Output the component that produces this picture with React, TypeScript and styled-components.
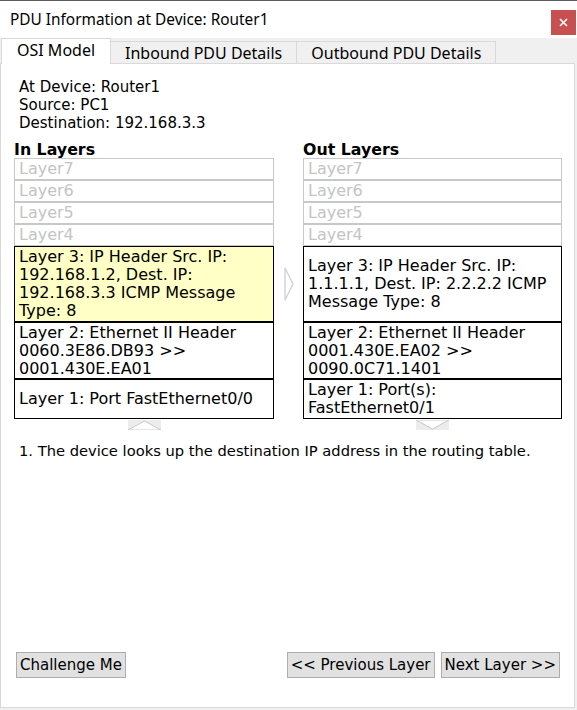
import React from 'react'
import styled, { createGlobalStyle } from 'styled-components'

const GlobalStyle = createGlobalStyle`
  html, body {
    margin: 0;
    padding: 0;
    background: #f0f0f0;
  }
`

type LayerState = 'off' | 'hi' | 'on'

interface LayerInfo {
  text: string
  height: number
  state: LayerState
}

const inLayers: LayerInfo[] = [
  { text: 'Layer7', height: 22, state: 'off' },
  { text: 'Layer6', height: 22, state: 'off' },
  { text: 'Layer5', height: 22, state: 'off' },
  { text: 'Layer4', height: 22, state: 'off' },
  {
    text: 'Layer 3: IP Header Src. IP: 192.168.1.2, Dest. IP: 192.168.3.3 ICMP Message Type: 8',
    height: 76,
    state: 'hi',
  },
  {
    text: 'Layer 2: Ethernet II Header 0060.3E86.DB93 >> 0001.430E.EA01',
    height: 57,
    state: 'on',
  },
  { text: 'Layer 1: Port FastEthernet0/0', height: 40, state: 'on' },
]

const outLayers: LayerInfo[] = [
  { text: 'Layer7', height: 22, state: 'off' },
  { text: 'Layer6', height: 22, state: 'off' },
  { text: 'Layer5', height: 22, state: 'off' },
  { text: 'Layer4', height: 22, state: 'off' },
  {
    text: 'Layer 3: IP Header Src. IP: 1.1.1.1, Dest. IP: 2.2.2.2 ICMP Message Type: 8',
    height: 76,
    state: 'on',
  },
  {
    text: 'Layer 2: Ethernet II Header 0001.430E.EA02 >> 0090.0C71.1401',
    height: 57,
    state: 'on',
  },
  { text: 'Layer 1: Port(s): FastEthernet0/1', height: 40, state: 'on' },
]

export default function App() {
  return (
    <>
      <GlobalStyle />
      <Window>
        <TitleBar>
          <TitleText>PDU Information at Device: Router1</TitleText>
          <CloseButton>
            <svg width="9" height="9" viewBox="0 0 9 9">
              <path d="M1 1 L8 8 M8 1 L1 8" stroke="#fff" strokeWidth="1.6" />
            </svg>
          </CloseButton>
        </TitleBar>
        <WindowBody>
          <TabStrip>
            <Tab $active>OSI Model</Tab>
            <Tab>Inbound PDU Details</Tab>
            <Tab>Outbound PDU Details</Tab>
          </TabStrip>
          <Panel>
            <InfoBlock>
              <div>At Device: Router1</div>
              <div>Source: PC1</div>
              <div>Destination: 192.168.3.3</div>
            </InfoBlock>
            <Columns>
              <Column>
                <ColumnHeading>In Layers</ColumnHeading>
                <LayerStack>
                  {inLayers.map((l) => (
                    <LayerBox key={l.text} $h={l.height} $state={l.state}>
                      {l.text}
                    </LayerBox>
                  ))}
                </LayerStack>
                <Chevron>
                  <svg width="33" height="10" viewBox="0 0 33 10">
                    <rect x="0" y="0" width="33" height="10" fill="#ececec" />
                    <polygon points="0,10 16.5,1 33,10" fill="#fff" stroke="#c9c9c9" strokeWidth="1" />
                  </svg>
                </Chevron>
              </Column>
              <Middle>
                <svg width="10" height="34" viewBox="0 0 10 34">
                  <polygon points="1,1 9,17 1,33" fill="#fff" stroke="#d2d2d2" strokeWidth="1.4" />
                </svg>
              </Middle>
              <Column>
                <ColumnHeading>Out Layers</ColumnHeading>
                <LayerStack>
                  {outLayers.map((l) => (
                    <LayerBox key={l.text} $h={l.height} $state={l.state}>
                      {l.text}
                    </LayerBox>
                  ))}
                </LayerStack>
                <Chevron>
                  <svg width="33" height="10" viewBox="0 0 33 10">
                    <rect x="0" y="0" width="33" height="10" fill="#ececec" />
                    <polygon points="0,0 16.5,9 33,0" fill="#fff" stroke="#c9c9c9" strokeWidth="1" />
                  </svg>
                </Chevron>
              </Column>
            </Columns>
            <Description>
              1. The device looks up the destination IP address in the routing table.
            </Description>
            <ButtonRow>
              <Button>Challenge Me</Button>
              <RightButtons>
                <Button>&lt;&lt; Previous Layer</Button>
                <Button>Next Layer &gt;&gt;</Button>
              </RightButtons>
            </ButtonRow>
          </Panel>
        </WindowBody>
      </Window>
    </>
  )
}

const Window = styled.div`
  width: 577px;
  height: 710px;
  display: flex;
  flex-direction: column;
  border-top: 1px solid #5c5c5c;
  box-sizing: border-box;
  background: #fff;
`

const TitleBar = styled.div`
  height: 37px;
  flex-shrink: 0;
  display: flex;
  align-items: center;
  justify-content: space-between;
  padding: 0 1px 0 10px;
  background: #fff;
`

const TitleText = styled.div`
  font-family: 'Noto Sans', sans-serif;
  font-size: 15.4px;
  color: #000;
`

const CloseButton = styled.div`
  width: 25px;
  height: 25px;
  margin-top: 6px;
  background: #c75050;
  display: flex;
  align-items: center;
  justify-content: center;
`

const WindowBody = styled.div`
  flex: 1;
  display: flex;
  flex-direction: column;
  background: #f0f0f0;
  padding: 0 2px 2px 0;
  min-height: 0;
`

const TabStrip = styled.div`
  height: 25px;
  display: flex;
  align-items: flex-start;
  padding-left: 1px;
  position: relative;
  z-index: 1;
`

const Tab = styled.div<{ $active?: boolean }>`
  box-sizing: border-box;
  height: ${(p) => (p.$active ? '26px' : '22px')};
  margin-top: ${(p) => (p.$active ? '0' : '3px')};
  padding: ${(p) => (p.$active ? '0 15px 3px 15px' : '0 14px')};
  border: 1px solid #d9d9d9;
  border-bottom: none;
  border-left: ${(p) => (p.$active ? '1px solid #d9d9d9' : 'none')};
  background: ${(p) => (p.$active ? '#fff' : '#f0f0f0')};
  font-family: 'Noto Sans', sans-serif;
  font-size: 16px;
  color: #000;
  display: flex;
  align-items: center;
  white-space: nowrap;
`

const Panel = styled.div`
  flex: 1;
  display: flex;
  flex-direction: column;
  background: #fff;
  border: 1px solid #d9d9d9;
  min-height: 0;
  font-family: 'DejaVu Sans', Verdana, sans-serif;
  font-size: 15px;
  color: #000;
`

const InfoBlock = styled.div`
  padding: 14px 0 0 18px;
  line-height: 18px;
`

const Columns = styled.div`
  display: grid;
  grid-template-columns: 260px 29px 259px;
  padding-left: 13px;
  margin-top: 9px;
`

const Column = styled.div`
  display: flex;
  flex-direction: column;
`

const ColumnHeading = styled.div`
  font-weight: bold;
  font-size: 15.8px;
  line-height: 17px;
`

const LayerStack = styled.div`
  display: flex;
  flex-direction: column;
`

const LayerBox = styled.div<{ $h: number; $state: LayerState }>`
  box-sizing: border-box;
  height: ${(p) => p.$h}px;
  border: 1px solid ${(p) => (p.$state === 'off' ? '#c8c8c8' : '#000')};
  background: ${(p) => (p.$state === 'hi' ? '#ffffc6' : '#fff')};
  color: ${(p) => (p.$state === 'off' ? '#c4c4c4' : '#000')};
  font-size: 16px;
  padding: 0 4px;
  display: flex;
  align-items: center;
  line-height: ${(p) => (p.$state === 'off' ? '20px' : '18px')};
`

const Chevron = styled.div`
  align-self: center;
  height: 10px;
  margin-top: 1px;
  display: flex;
`

const Middle = styled.div`
  display: flex;
  justify-content: center;
  padding-top: 126px;
`

const Description = styled.div`
  padding-left: 18px;
  margin-top: 12px;
  font-size: 14.7px;
  line-height: 18px;
`

const ButtonRow = styled.div`
  margin-top: auto;
  display: flex;
  justify-content: space-between;
  padding: 0 14px 29px 15px;
`

const RightButtons = styled.div`
  display: flex;
  gap: 6px;
`

const Button = styled.div`
  box-sizing: border-box;
  height: 26px;
  padding: 0 3px;
  background: #e1e1e1;
  border: 1px solid #adadad;
  display: flex;
  align-items: center;
  font-family: 'DejaVu Sans', Verdana, sans-serif;
  font-size: 15px;
  color: #000;
  white-space: nowrap;
`
